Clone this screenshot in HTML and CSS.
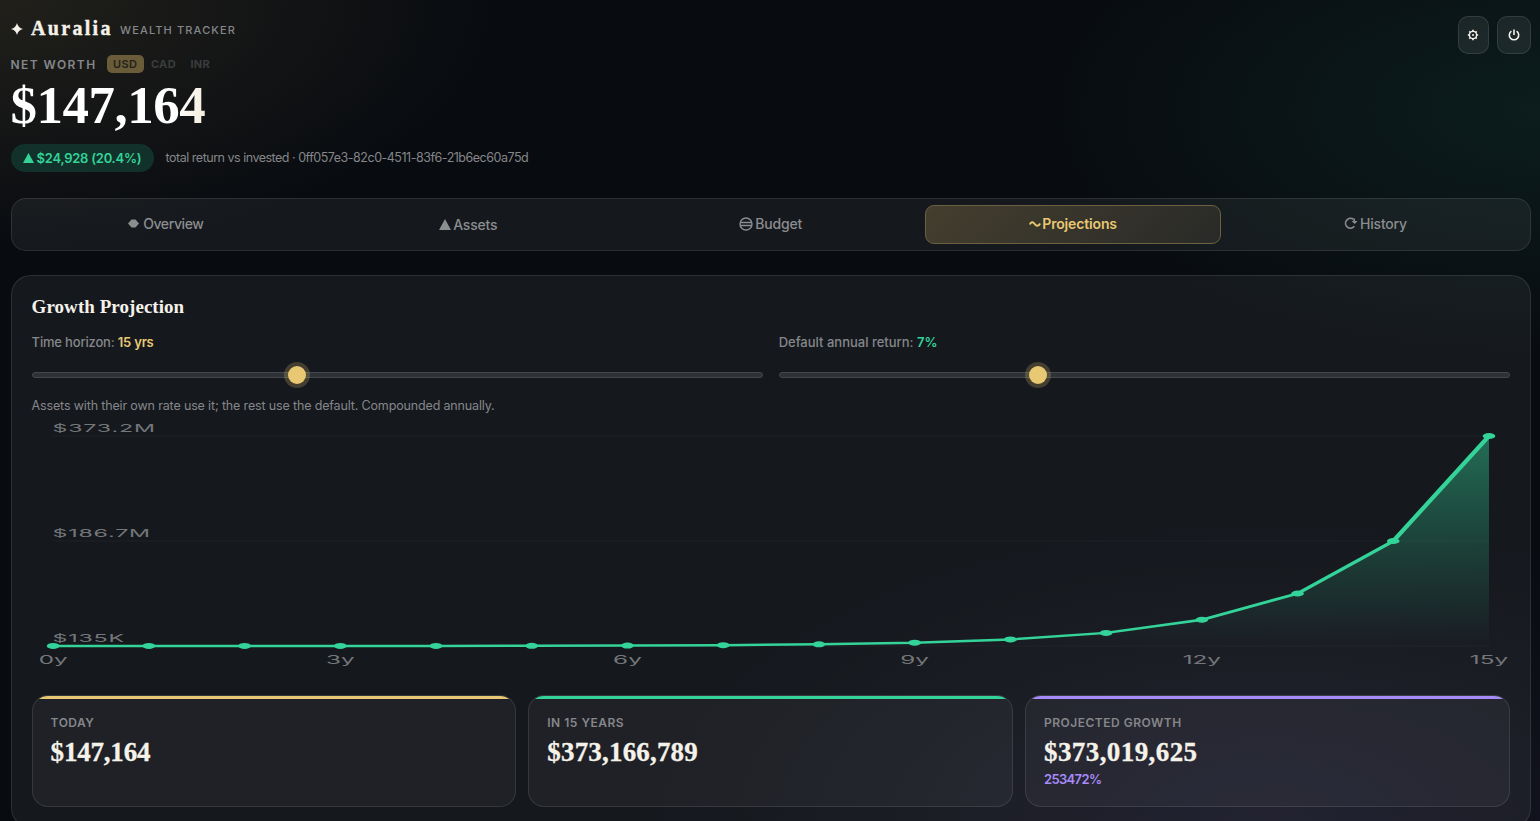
FILE: index.html
```
<!DOCTYPE html>
<html lang="en">
  <head>
    <meta charset="utf-8">
    <title>Auralia - Wealth Tracker</title>
    <link rel="stylesheet" href="styles.css">
  </head>
  <body>
    <div class="app">
      <header class="header">
        <div class="header-left">
          <div class="brand">
            <svg class="brand-mark" width="12" height="12" viewBox="0 0 12 12"><path d="M6 0Q7.200 4.800 12 6Q7.200 7.200 6 12Q4.800 7.200 0 6Q4.800 4.800 6 0Z" fill="currentColor"/></svg>
            <span class="brand-name">Auralia</span>
            <span class="brand-sub">WEALTH TRACKER</span>
          </div>
          <div class="worth-row">
            <span class="worth-label">NET WORTH</span>
            <span class="cur active">USD</span>
            <span class="cur cad">CAD</span>
            <span class="cur inr">INR</span>
          </div>
          <div class="net-worth">$147,164</div>
          <div class="return-row">
            <span class="pill">
              <svg width="11" height="10" viewBox="0 0 11 10"><path d="M5.500 0L11 10H0Z" fill="currentColor"/></svg>
              <span class="pill-text">$24,928 (20.4%)</span>
            </span>
            <span class="return-note">total return vs invested · 0ff057e3-82c0-4511-83f6-21b6ec60a75d</span>
          </div>
        </div>
        <div class="header-actions">
          <button class="icon-btn settings" aria-label="Settings">
            <svg width="12" height="12" viewBox="0 0 12 12" fill="none" stroke="currentColor">
              <circle cx="6" cy="6" r="3.600" stroke-width="1.400"/>
              <circle cx="6" cy="6" r="1" fill="currentColor" stroke="none"/>
              <path d="M6 .8V2.200M6 9.800v1.400M.8 6H2.200M9.800 6h1.400M2.300 2.300l1 1M8.700 8.700l1 1M2.300 9.700l1-1M8.700 3.300l1-1" stroke-width="1.700"/>
            </svg>
          </button>
          <button class="icon-btn power" aria-label="Sign out">
            <svg width="12" height="12" viewBox="0 0 12 12" fill="none" stroke="currentColor" stroke-width="1.600">
              <path d="M3.400 2.200A4.700 4.700 0 1 0 8.600 2.200M6 .5V6"/>
            </svg>
          </button>
        </div>
      </header>

      <nav class="tabs">
        <button class="tab overview">
          <svg width="11" height="9" viewBox="0 0 11 9"><path d="M0 4.500L3.500 .5H7.500L11 4.500L7.500 8.500H3.500Z" fill="currentColor"/></svg>
          <span>Overview</span>
        </button>
        <button class="tab assets">
          <svg width="12" height="11" viewBox="0 0 12 11"><path d="M6 0L12 11H0Z" fill="currentColor"/></svg>
          <span>Assets</span>
        </button>
        <button class="tab budget">
          <svg width="14" height="14" viewBox="0 0 14 14" fill="none" stroke="currentColor" stroke-width="1.400"><circle cx="7" cy="7" r="6"/><path d="M1 5.500H13M1 8.500H13"/></svg>
          <span>Budget</span>
        </button>
        <button class="tab projections active">
          <svg width="12" height="6" viewBox="0 0 12 6" fill="none" stroke="currentColor" stroke-width="1.900"><path d="M.8 3.500C2 .5 4 .5 5.700 3S9.500 5.500 11.200 2.500"/></svg>
          <span>Projections</span>
        </button>
        <button class="tab history">
          <svg width="14" height="13" viewBox="0 0 14 13" fill="none" stroke="currentColor" stroke-width="1.700"><path d="M10.300 9.300A4.900 4.900 0 1 1 9.500 2.400"/><path d="M11 1.500V4H13.500L10.800 7L7.500 4H9.500V1.500Z" fill="currentColor" stroke="none"/></svg>
          <span>History</span>
        </button>
      </nav>

      <section class="card">
        <h2>Growth Projection</h2>
        <div class="sliders">
          <label class="field">
            <span class="field-label horizon">Time horizon: <b class="gold">15 yrs</b></span>
            <input type="range" min="1" max="40" value="15">
          </label>
          <label class="field">
            <span class="field-label rate">Default annual return: <b class="green">7%</b></span>
            <input type="range" min="0" max="20" value="7">
          </label>
        </div>
        <p class="note">Assets with their own rate use it; the rest use the default. Compounded annually.</p>

        <svg class="chart" id="chart" viewBox="0 0 700 260" preserveAspectRatio="none">
          <defs>
            <linearGradient id="area" x1="0" y1="0" x2="0" y2="1">
              <stop offset="0" stop-color="#34d399" stop-opacity="0.45"/>
              <stop offset="1" stop-color="#34d399" stop-opacity="0"/>
            </linearGradient>
          </defs>
          <g class="grid">
            <path d="M10 20H690M10 125H690M10 230H690"/>
          </g>
          <g class="axis">
            <text x="9.700" y="16">$373.2M</text>
            <text x="9.700" y="121">$186.7M</text>
            <text x="9.700" y="226">$135K</text>
          </g>
          <g id="plot"></g>
        </svg>

        <div class="stats">
          <div class="stat stat-gold">
            <div class="stat-label">TODAY</div>
            <div class="stat-value">$147,164</div>
          </div>
          <div class="stat stat-green">
            <div class="stat-label">IN 15 YEARS</div>
            <div class="stat-value">$373,166,789</div>
          </div>
          <div class="stat stat-purple">
            <div class="stat-label">PROJECTED GROWTH</div>
            <div class="stat-value">$373,019,625</div>
            <div class="stat-delta">253472%</div>
          </div>
        </div>
      </section>
    </div>

    <script>
      const years = 15;
      const points = [];

      for (let i = 0; i <= years; i++) {
        const x = 10 + (680 * i) / years;
        const y = 230 - 210 * Math.pow(2, i - years);
        points.push([x, y]);
      }

      const line = points.map((p) => p.join(",")).join(" ");
      let html = `<polygon points="10,230 ${line} 690,230" fill="url(#area)"/>`;
      html += `<polyline class="line" points="${line}"/>`;
      points.forEach((p, i) => {
        html += `<circle class="dot" cx="${p[0]}" cy="${p[1]}" r="3"/>`;
        if (i % 3 === 0) {
          html += `<text class="year" x="${p[0]}" y="248.500">${i}y</text>`;
        }
      });
      document.getElementById("plot").innerHTML = html;
    </script>
  </body>
</html>
```

FILE: styles.css
```
* {
  box-sizing: border-box;
}
html {
  height: 100%;
  overflow: hidden;
}
body {
  margin: 0;
  height: 821px;
  overflow: hidden;
  color: #f5f2ea;
  font-family: Inter, "Liberation Sans", sans-serif;
  background:
    radial-gradient(500px 250px at 0 0, rgba(232, 200, 115, 0.11), transparent),
    radial-gradient(520px 250px at 1540px 110px, rgba(52, 211, 153, 0.09), transparent),
    radial-gradient(620px 300px at 1270px 821px, rgba(167, 139, 250, 0.09), transparent),
    #080b10;
}
.app {
  padding: 16px 9.3px 0 10.6px;
}
button {
  font: inherit;
  color: inherit;
  background: none;
  border: 1px solid transparent;
  padding: 0;
}
svg {
  display: block;
  flex: none;
}

/* header */
.header {
  display: flex;
  justify-content: space-between;
  align-items: flex-start;
  height: 182px;
}
.brand {
  display: flex;
  align-items: center;
  height: 25px;
}
.brand-name {
  margin-left: 8.5px;
  width: 89px;
  font: bold 20px/25px "Liberation Serif", serif;
  letter-spacing: 2.3px;
  -webkit-text-stroke: 0.4px currentColor;
}
.brand-sub {
  padding-top: 3px;
  font-size: 11px;
  font-weight: 500;
  letter-spacing: 1.14px;
  color: #85878a;
}
.worth-row {
  display: flex;
  align-items: center;
  height: 18px;
  margin-top: 14px;
  white-space: nowrap;
}
.worth-label {
  width: 96px;
  font-size: 12px;
  font-weight: 600;
  letter-spacing: 1.4px;
  color: #85878a;
}
.cur {
  font-size: 11px;
  font-weight: 700;
  line-height: 18px;
  letter-spacing: 0.3px;
  color: #393c3e;
}
.cur.active {
  width: 37px;
  text-align: center;
  font-weight: 600;
  color: #24221b;
  background: #6a5c38;
  border-radius: 5px;
}
.cad {
  margin-left: 7.4px;
  width: 39.4px;
}
.net-worth {
  height: 62px;
  margin-top: 1px;
  width: 200px;
  font: bold 53px/62px "Liberation Serif", serif;
  letter-spacing: -0.5px;
  color: transparent;
  background: linear-gradient(100deg, #fff 80%, #f2e7d5);
  -webkit-background-clip: text;
  background-clip: text;
}
.return-row {
  display: flex;
  align-items: center;
  margin-top: 8px;
  height: 28px;
}
.pill {
  display: flex;
  align-items: center;
  gap: 3px;
  width: 143px;
  height: 28px;
  padding-left: 12px;
  border-radius: 14px;
  background: #12312a;
  color: #34d399;
  font-size: 13px;
  font-weight: 600;
  letter-spacing: -0.25px;
  white-space: nowrap;
}
.return-note {
  margin: -1px 0 0 12px;
  font-size: 12.5px;
  letter-spacing: -0.49px;
  color: #85878a;
  white-space: nowrap;
}
.header-actions {
  display: flex;
  gap: 8px;
}
.icon-btn {
  display: flex;
  align-items: center;
  justify-content: center;
  height: 38px;
  border: 1px solid rgba(255, 255, 255, 0.1);
  border-radius: 10px;
  background: rgba(255, 255, 255, 0.07);
}
.settings {
  width: 31px;
}
.power {
  width: 34px;
}

/* tabs */
.tabs {
  display: grid;
  grid-template-columns: repeat(5, 1fr);
  gap: 6px;
  height: 53px;
  padding: 6px;
  border: 1px solid rgba(255, 255, 255, 0.1);
  border-radius: 15px;
  background: rgba(255, 255, 255, 0.055);
}
.tab {
  display: flex;
  align-items: center;
  justify-content: center;
  gap: 2px;
  padding-bottom: 2px;
  border-radius: 9px;
  font-size: 14px;
  font-weight: 500;
  letter-spacing: -0.2px;
  color: #8b8d8f;
}
.overview {
  gap: 4px;
  letter-spacing: -0.4px;
}
.assets {
  padding-bottom: 0;
}
.tab.active {
  gap: 1px;
  color: #e8c873;
  font-weight: 600;
  letter-spacing: -0.15px;
  border-color: #6b6040;
  background: linear-gradient(135deg, #443e2e, #292a28);
}

/* projection card */
.card {
  height: 553px;
  margin-top: 24px;
  padding: 19px 20px 0;
  border: 1px solid rgba(255, 255, 255, 0.1);
  border-radius: 20px;
  background: rgba(255, 255, 255, 0.055);
}
h2 {
  margin: 0;
  font: bold 19px/24px "Liberation Serif", serif;
  letter-spacing: 0.05px;
}
.sliders {
  display: grid;
  grid-template-columns: 1fr 1fr;
  gap: 16px;
  margin-top: 13px;
}
.field {
  display: block;
}
.field-label {
  display: block;
  font-size: 13px;
  font-weight: 500;
  line-height: 20px;
  letter-spacing: -0.18px;
  color: #85878a;
}
.field-label b {
  font-weight: 600;
}
.rate {
  letter-spacing: 0;
}
.gold {
  color: #e8c873;
}
.green {
  color: #34d399;
}
input[type="range"] {
  -webkit-appearance: none;
  appearance: none;
  display: block;
  width: 100%;
  height: 6px;
  margin: 20px 0 0;
  border: 1px solid #43464a;
  border-radius: 3px;
  background: #2e3135;
}
input[type="range"]::-webkit-slider-runnable-track {
  height: 4px;
}
input[type="range"]::-webkit-slider-thumb {
  -webkit-appearance: none;
  width: 18px;
  height: 18px;
  margin-top: -7px;
  border-radius: 50%;
  background: #e8c873;
  box-shadow: 0 0 0 4px rgba(232, 200, 115, 0.22);
}
.note {
  margin: 18px 0 0;
  font-size: 12.5px;
  line-height: 20px;
  letter-spacing: -0.15px;
  color: #85878a;
}
.chart {
  width: 100%;
  height: 260px;
  overflow: visible;
}
.grid {
  stroke: rgba(255, 255, 255, 0.04);
}
.axis text,
.year {
  font-size: 11px;
  fill: #74777a;
}
.axis text {
  letter-spacing: 0.38px;
}
.year {
  font-size: 11.5px;
  text-anchor: middle;
}
.line {
  fill: none;
  stroke: #34d399;
  stroke-width: 2.5;
}
.dot {
  fill: #34d399;
}

/* stats */
.stats {
  display: grid;
  grid-template-columns: repeat(3, 1fr);
  gap: 12px;
  margin-top: 19px;
}
.stat {
  position: relative;
  overflow: hidden;
  height: 112px;
  padding: 19px 18px 18px;
  border: 1px solid rgba(255, 255, 255, 0.1);
  border-radius: 16px;
  background: rgba(255, 255, 255, 0.045);
}
.stat::before {
  content: "";
  position: absolute;
  top: 0;
  left: 0;
  right: 0;
  height: 3px;
}
.stat-gold::before {
  background: #e8c873;
}
.stat-green::before {
  background: #34d399;
}
.stat-purple::before {
  background: #a78bfa;
}
.stat-label {
  font-size: 12px;
  font-weight: 600;
  line-height: 16px;
  letter-spacing: 0.5px;
  color: #85878a;
}
.stat-value {
  margin-top: 5px;
  font: bold 27px/32px "Liberation Serif", serif;
  letter-spacing: -0.2px;
  -webkit-text-stroke: 0.3px currentColor;
}
.stat-green .stat-value {
  letter-spacing: 0.18px;
}
.stat-purple .stat-value {
  letter-spacing: 0.42px;
}
.stat-delta {
  margin-top: 1px;
  font-size: 13px;
  font-weight: 600;
  line-height: 20px;
  letter-spacing: -0.65px;
  color: #a78bfa;
}
```
